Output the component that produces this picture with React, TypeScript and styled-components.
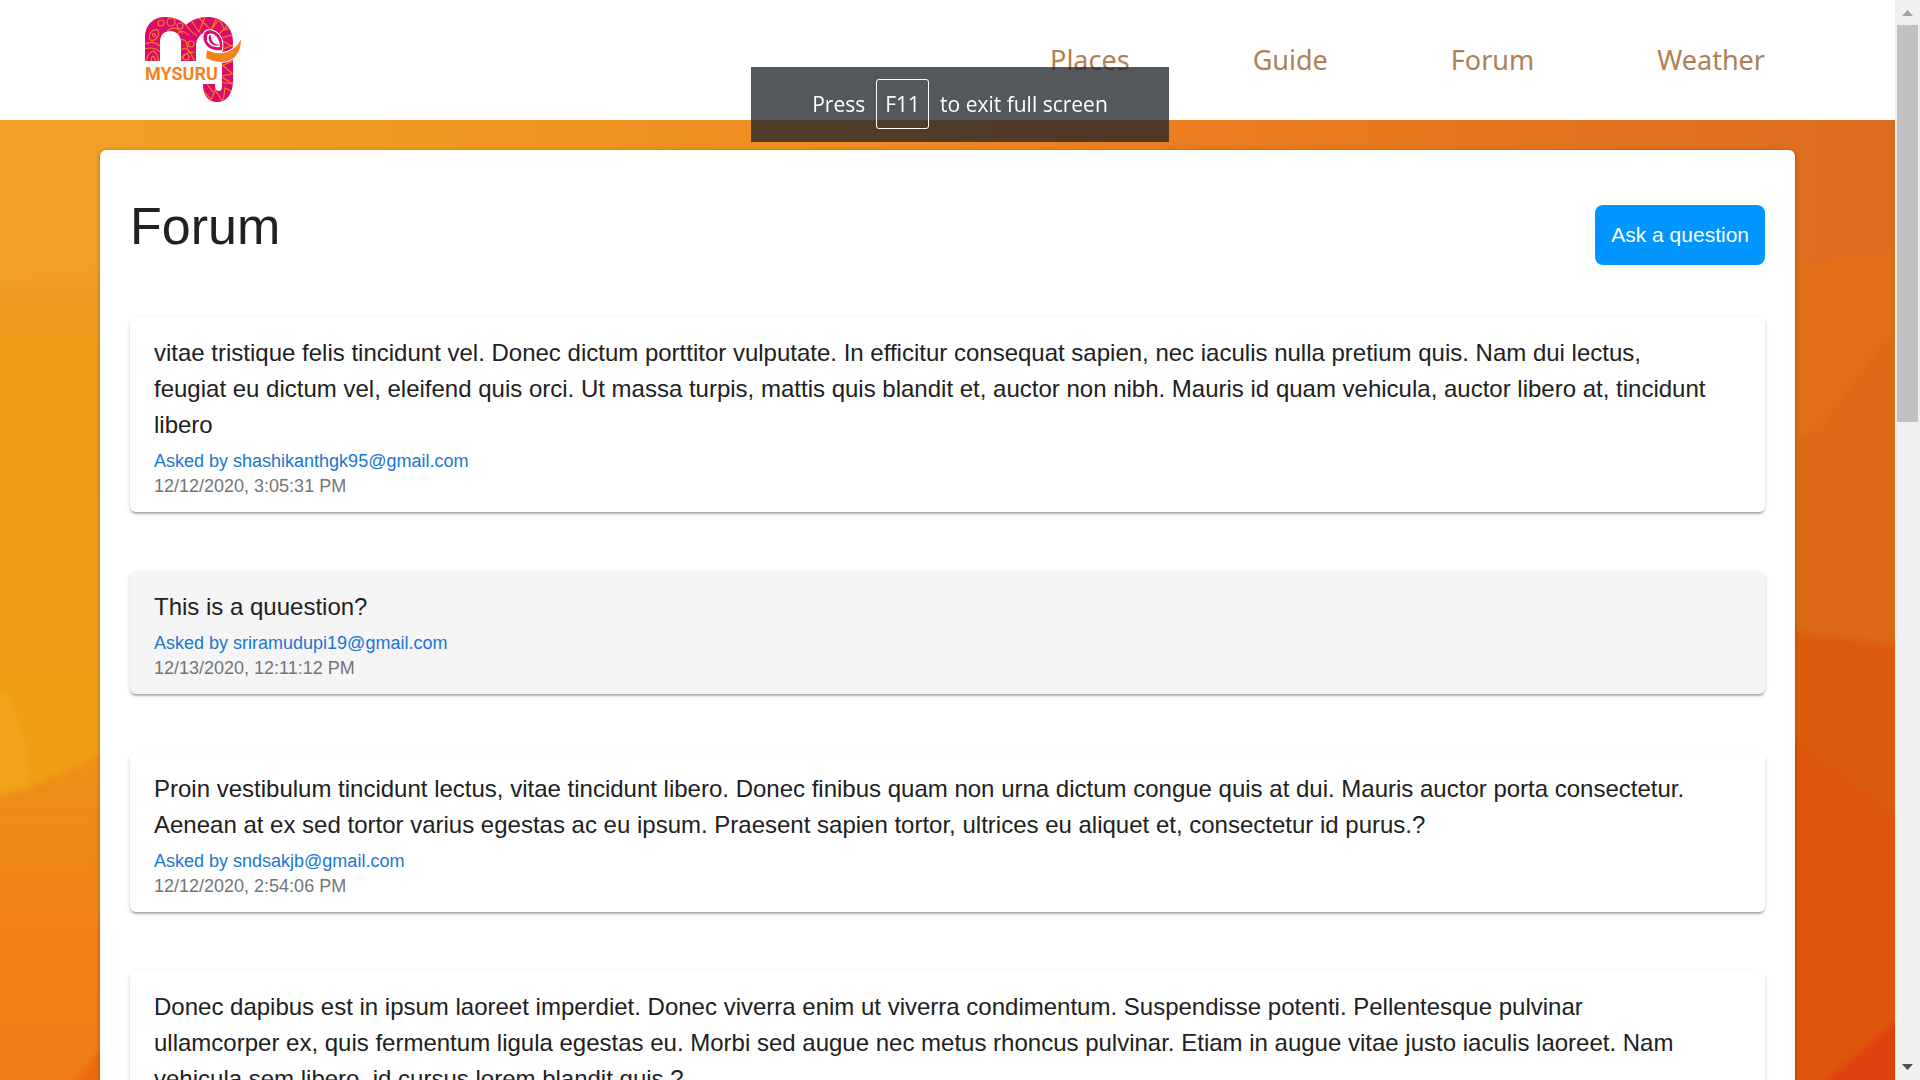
import React from "react";
import styled, { createGlobalStyle } from "styled-components";

const GlobalStyle = createGlobalStyle`
  * { box-sizing: border-box; }
  body { margin: 0; overflow: hidden; background: #fff; font-family: "Liberation Sans", Arial, sans-serif; color: #212121; }
`;

const Window = styled.div`
  display: flex;
  height: 100vh;
  overflow: hidden;
`;

const Page = styled.div`
  flex: 1;
  min-width: 0;
  overflow: hidden;
  position: relative;
  isolation: isolate;
`;

const Backdrop = styled.svg`
  position: absolute;
  inset: 0;
  width: 100%;
  height: 100vh;
  z-index: -1;
`;

const Header = styled.header`
  display: flex;
  align-items: center;
  justify-content: space-between;
  height: 120px;
  padding: 0 130px 0 145px;
  background: #fff;
`;

const Logo = styled.svg`
  display: block;
  width: 97px;
  height: 88px;
`;

const Wordmark = styled.text`
  font: 700 18px Roboto, sans-serif;
  fill: #f58220;
`;

const LogoLink = styled.a`
  display: block;
`;

const Nav = styled.nav`
  display: flex;
  gap: 123px;
`;

const NavLink = styled.a`
  font: 400 27px/38px "Noto Sans", sans-serif;
  color: #b08055;
  text-decoration: none;
`;

const Panel = styled.main`
  margin: 30px 100px 0;
  padding: 30px;
  border-radius: 6px;
  background: #fff;
  box-shadow: 0 1px 4px rgba(0, 0, 0, 0.3);
`;

const PanelHead = styled.div`
  display: flex;
  justify-content: space-between;
  align-items: center;
  height: 109px;
`;

const Title = styled.h1`
  margin: 0;
  padding-bottom: 18px;
  font-size: 52px;
  line-height: 60px;
  font-weight: 400;
`;

const AskButton = styled.button`
  height: 60px;
  padding: 0 16px;
  border: 0;
  border-radius: 8px;
  background: #0095ff;
  color: #fff;
  font: 400 21px/24px "Liberation Sans", Arial, sans-serif;
`;

const List = styled.div`
  display: flex;
  flex-direction: column;
  gap: 59px;
  padding-top: 28px;
`;

const Card = styled.article<{ $shaded?: boolean }>`
  padding: 18px 24px 13px;
  border-radius: 6px;
  background: ${(p) => (p.$shaded ? "#f5f5f5" : "#fff")};
  box-shadow: 0 3px 2px -2px rgba(0, 0, 0, 0.2), 0 2px 2px rgba(0, 0, 0, 0.14), 0 2px 5px rgba(0, 0, 0, 0.12);
`;

const Question = styled.p`
  margin: 0 0 6px;
  padding-right: 30px;
  font-size: 24px;
  line-height: 36px;
`;

const Author = styled.a`
  display: block;
  font-size: 18px;
  line-height: 25px;
  color: #1976d2;
  text-decoration: none;
`;

const Stamp = styled.time`
  display: block;
  font-size: 18px;
  line-height: 25px;
  color: #757575;
`;

const Notice = styled.div`
  position: fixed;
  top: 67px;
  left: 50%;
  transform: translateX(-50%);
  display: flex;
  align-items: center;
  justify-content: center;
  gap: 11px;
  width: 418px;
  height: 75px;
  padding-bottom: 2px;
  background: rgba(32, 36, 42, 0.77);
  color: #fff;
  font: 400 21px/30px "Open Sans", sans-serif;
  white-space: nowrap;
`;

const Key = styled.kbd`
  padding: 9px 8px;
  border: 1px solid #fff;
  border-radius: 3px;
  font: inherit;
`;

const Track = styled.div`
  display: flex;
  flex-direction: column;
  width: 25px;
  padding: 0 2px;
  background: #f0f0f0;
`;

const Arrow = styled.svg`
  display: block;
  width: 21px;
  height: 25px;
`;

const Thumb = styled.div`
  flex: 397 0 0;
  background: #c1c1c1;
`;

const Spacer = styled.div`
  flex: 633 0 0;
`;

const links = ["Places", "Guide", "Forum", "Weather"];

const questions = [
  {
    text: "vitae tristique felis tincidunt vel. Donec dictum porttitor vulputate. In efficitur consequat sapien, nec iaculis nulla pretium quis. Nam dui lectus, feugiat eu dictum vel, eleifend quis orci. Ut massa turpis, mattis quis blandit et, auctor non nibh. Mauris id quam vehicula, auctor libero at, tincidunt libero",
    author: "shashikanthgk95@gmail.com",
    time: "12/12/2020, 3:05:31 PM",
  },
  { text: "This is a quuestion?", author: "sriramudupi19@gmail.com", time: "12/13/2020, 12:11:12 PM", shaded: true },
  {
    text: "Proin vestibulum tincidunt lectus, vitae tincidunt libero. Donec finibus quam non urna dictum congue quis at dui. Mauris auctor porta consectetur. Aenean at ex sed tortor varius egestas ac eu ipsum. Praesent sapien tortor, ultrices eu aliquet et, consectetur id purus.?",
    author: "sndsakjb@gmail.com",
    time: "12/12/2020, 2:54:06 PM",
  },
  {
    text: "Donec dapibus est in ipsum laoreet imperdiet. Donec viverra enim ut viverra condimentum. Suspendisse potenti. Pellentesque pulvinar ullamcorper ex, quis fermentum ligula egestas eu. Morbi sed augue nec metus rhoncus pulvinar. Etiam in augue vitae justo iaculis laoreet. Nam vehicula sem libero, id cursus lorem blandit quis.?",
  },
];

const BODY =
  "M0 45V21C0 9 8 1 20 1C29 1 36 4 41 9C46 4 54 1 62 1C77 1 88 11 88 26V64C88 78 82 86 72 86C63 86 58 79 58 68H70C70 73 71 75 74 75C77 75 77 72 77 68V28C76 20 70 16 64 16C55 16 51 23 51 30V45H36V26C36 19 31 15 25 15C18 15 15 20 15 26V45Z";

const ElephantLogo = () => (
  <Logo viewBox="0 0 97 88" role="img" aria-label="Mysuru">
    <defs>
      <clipPath id="body"><path d={BODY} /></clipPath>
    </defs>
    <path d={BODY} fill="#dc0a68" />
    <g clipPath="url(#body)" fill="none" stroke="#f08020" strokeWidth="1.2">
      <ellipse cx="9" cy="19" rx="4" ry="6" transform="rotate(35 9 19)" />
      <circle cx="9" cy="19" r="1.500" />
      <circle cx="16" cy="7" r="3" /><circle cx="26" cy="6" r="4" /><circle cx="35" cy="10" r="3" />
      <path d="M0 28Q8 24 15 30M0 33Q8 30 15 36M2 46Q1 38 8 35Q14 38 13 46M6 46Q6 41 8 40Q11 42 10 46" />
      <path d="M22 15Q30 8 38 18M32 18Q38 12 44 20M34 24Q42 22 42 30T50 36M36 34Q42 30 46 38T50 44M36 42L44 36M40 8Q46 16 52 20" />
      <circle cx="41" cy="41" r="3" /><circle cx="46" cy="28" r="3" />
      <path d="M46 4L54 16L60 1M54 2L66 14L72 1M66 14L74 3L80 14L88 10M74 18L84 8M76 22L90 18M76 24L90 32M76 34L90 28M76 50L90 44M76 48L88 58L75 60L88 68L74 66M56 72L66 84L70 74L78 86L80 72L88 76M62 68L68 76" />
    </g>
    <path d="M59 18C60 13 68 13 73 18C77 22 78 28 77 34C70 35 63 33 60 27C58 24 58 21 59 18Z" fill="#dc0a68" stroke="#fff" strokeWidth="2" paintOrder="stroke" />
    <path d="M62 20C63 16 69 17 72 21C74 24 75 28 75 31C69 32 64 29 62 25Z" fill="#fff" />
    <path d="M66 19C65 24 69 29 75 29C70 31 65 28 64 24C63 21 64 19 66 19Z" fill="#dc0a68" />
    <path d="M62 34C76 41 90 36 96 23C96 38 88 46 76 46C69 46 64 43 61 42Z" fill="#f58220" stroke="#fff" strokeWidth="2" paintOrder="stroke" />
    <rect x="0" y="47" width="75" height="20" fill="#fff" />
    <Wordmark x="0" y="64">MYSURU</Wordmark>
  </Logo>
);

const Scene = () => (
  <Backdrop viewBox="0 0 1895 1080" preserveAspectRatio="none" aria-hidden="true">
    <defs>
      <linearGradient id="top" x1="0" x2="1">
        <stop offset="0" stopColor="#f2a128" />
        <stop offset="0.15" stopColor="#ef9c22" />
        <stop offset="0.5" stopColor="#ee881f" />
        <stop offset="0.56" stopColor="#ee8020" />
        <stop offset="0.75" stopColor="#e6771d" />
        <stop offset="1" stopColor="#dc6b20" />
      </linearGradient>
      <linearGradient id="left" x1="0" y1="0" x2="0" y2="1">
        <stop offset="0" stopColor="#f09d24" />
        <stop offset="0.1" stopColor="#ef9c18" />
        <stop offset="1" stopColor="#f0a01a" />
      </linearGradient>
      <linearGradient id="leftLow" x1="0" y1="0" x2="0" y2="1">
        <stop offset="0" stopColor="#ee9116" />
        <stop offset="0.5" stopColor="#f08212" />
        <stop offset="1" stopColor="#f07c12" />
      </linearGradient>
      <filter id="soft"><feGaussianBlur stdDeviation="3" /></filter>
    </defs>
    <rect width="1895" height="1080" fill="url(#top)" />
    <g filter="url(#soft)">
      <path d="M-20 280L120 270V1100H-20Z" fill="url(#left)" />
      <path d="M-20 800L30 788L120 745V1100H-20Z" fill="url(#leftLow)" />
      <path d="M-20 690L10 695L28 750L30 785L-20 800Z" fill="#f0a41a" />
      <path d="M60 1100L120 1025V1100Z" fill="#ec6a10" />
      <path d="M1780 268L1920 248V660H1780Z" fill="#e16e18" />
      <path d="M1780 445L1820 430L1895 330H1920V660H1780Z" fill="#db6914" />
      <path d="M1780 630L1920 648V1100H1780Z" fill="#dc5c10" />
      <path d="M1780 730L1920 835V1100H1780Z" fill="#e0540f" />
      <path d="M1805 1100L1920 1000V1100Z" fill="#de430e" />
    </g>
  </Backdrop>
);

export default function App() {
  return (
    <Window>
      <GlobalStyle />
      <Page>
        <Scene />
        <Header>
          <LogoLink href="#home"><ElephantLogo /></LogoLink>
          <Nav>
            {links.map((l) => (
              <NavLink key={l} href={"#" + l.toLowerCase()}>{l}</NavLink>
            ))}
          </Nav>
        </Header>
        <Panel>
          <PanelHead>
            <Title>Forum</Title>
            <AskButton type="button">Ask a question</AskButton>
          </PanelHead>
          <List>
            {questions.map((q) => (
              <Card key={q.text} $shaded={q.shaded}>
                <Question>{q.text}</Question>
                {q.author && <Author href={"mailto:" + q.author}>Asked by {q.author}</Author>}
                {q.time && <Stamp>{q.time}</Stamp>}
              </Card>
            ))}
          </List>
        </Panel>
      </Page>
      <Track aria-hidden="true">
        <Arrow viewBox="0 0 21 25"><path d="M5 16L10.500 10L16 16Z" fill="#a3a3a3" /></Arrow>
        <Thumb />
        <Spacer />
        <Arrow viewBox="0 0 21 25"><path d="M5 9L10.500 15L16 9Z" fill="#505050" /></Arrow>
      </Track>
      <Notice role="status">
        <span>Press</span>
        <Key>F11</Key>
        <span>to exit full screen</span>
      </Notice>
    </Window>
  );
}
